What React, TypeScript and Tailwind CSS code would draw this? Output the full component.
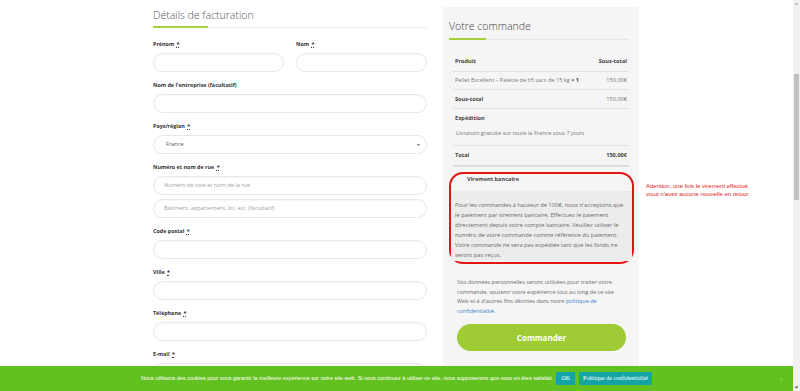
import React from "react";

function Label({ children }: { children: React.ReactNode }) {
  return (
    <div className="h-[8px] leading-[8px] text-[5.4px] font-bold text-[#333] mb-[5px] whitespace-nowrap">
      {children}
    </div>
  );
}

function Req() {
  return <span className="underline decoration-dotted ml-[1px]">*</span>;
}

function Input({ placeholder }: { placeholder?: string }) {
  return (
    <div className="h-[19px] rounded-full border border-[#e8e8e8] bg-white shadow-[inset_0_1px_2px_rgba(0,0,0,0.04)] flex items-center pl-[10px] text-[5.6px] text-[#a0a0a0] whitespace-nowrap">
      {placeholder}
    </div>
  );
}

function Field({ label, children }: { label: React.ReactNode; children?: React.ReactNode }) {
  return (
    <div className="mb-[9px]">
      <Label>{label}</Label>
      {children ?? <Input />}
    </div>
  );
}

function LeftCol() {
  return (
    <div className="w-[274px] shrink-0">
      <div className="pt-[8px] text-[10.5px] leading-[14px] font-light text-[#555] whitespace-nowrap">
        Détails de facturation
      </div>
      <div className="mt-[4px] flex items-end h-[2px]">
        <div className="w-[55px] h-[2px] bg-[#a6cf3c]" />
        <div className="flex-1 h-[1px] bg-[#ececec]" />
      </div>
      <div className="mt-[12px]">
        <div className="flex gap-[12px] mb-[9px]">
          <div className="w-[131px]">
            <Label>
              Prénom <Req />
            </Label>
            <Input />
          </div>
          <div className="flex-1">
            <Label>
              Nom <Req />
            </Label>
            <Input />
          </div>
        </div>
        <Field label={<>Nom de l'entreprise (facultatif)</>} />
        <Field
          label={
            <>
              Pays/région <Req />
            </>
          }
        >
          <div className="h-[19px] rounded-full border border-[#e8e8e8] bg-white flex items-center justify-between pl-[12px] pr-[6px] text-[5.6px] text-[#555]">
            <span>France</span>
            <svg width="3" height="2" viewBox="0 0 3 2">
              <path d="M0 0 L3 0 L1.5 2 Z" fill="#777" />
            </svg>
          </div>
        </Field>
        <div className="mb-[9px]">
          <Label>
            Numéro et nom de rue <Req />
          </Label>
          <Input placeholder="Numéro de voie et nom de la rue" />
          <div className="mt-[4px]">
            <Input placeholder="Bâtiment, appartement, lot, etc. (facultatif)" />
          </div>
        </div>
        <Field
          label={
            <>
              Code postal <Req />
            </>
          }
        />
        <Field
          label={
            <>
              Ville <Req />
            </>
          }
        />
        <Field
          label={
            <>
              Téléphone <Req />
            </>
          }
        />
        <Field
          label={
            <>
              E-mail <Req />
            </>
          }
        />
      </div>
    </div>
  );
}

function RightPanel() {
  const desc = [
    "Pour les commandes à hauteur de 100€, nous n'acceptons que",
    "le paiement par virement bancaire. Effectuez le paiement",
    "directement depuis votre compte bancaire. Veuillez utiliser le",
    "numéro de votre commande comme référence du paiement.",
    "Votre commande ne sera pas expédiée tant que les fonds ne",
    "seront pas reçus.",
  ];
  return (
    <div className="ml-[16px] mt-[7px] w-[196px] shrink-0 self-start bg-[#f5f5f5] pb-[30px]">
      <div className="px-[6px] pt-[12px]">
        <div className="text-[10.5px] leading-[14px] font-light text-[#444] whitespace-nowrap">
          Votre commande
        </div>
        <div className="mt-[5px] flex items-end h-[2px] mr-[4px]">
          <div className="w-[37px] h-[2px] bg-[#a6cf3c]" />
          <div className="flex-1 h-[1px] bg-[#e6e6e6]" />
        </div>
      </div>
      <div className="mx-[10px] mt-[12px] text-[5.6px] text-[#777]">
        <div className="h-[20px] flex items-center justify-between px-[2px] border-b border-[#e2e2e2] font-bold text-[#444]">
          <span>Produit</span>
          <span>Sous-total</span>
        </div>
        <div className="h-[18px] flex items-center justify-between px-[2px] border-b border-[#e2e2e2]">
          <span className="whitespace-nowrap">
            Pellet Excellent – Palette de 65 sacs de 15 kg <b className="text-[#444]">× 1</b>
          </span>
          <span>150,00€</span>
        </div>
        <div className="h-[19px] flex items-center justify-between px-[2px] border-b border-[#e2e2e2]">
          <span className="font-bold text-[#444]">Sous-total</span>
          <span>150,00€</span>
        </div>
        <div className="h-[37px] px-[2px] border-b border-[#e2e2e2] pt-[5px]">
          <div className="leading-[8px] font-bold text-[#444]">Expédition</div>
          <div className="leading-[8px] mt-[7px] pl-[1px] whitespace-nowrap">
            Livraison gratuite sur toute la France sous 7 jours
          </div>
        </div>
        <div className="h-[21px] flex items-center justify-between px-[2px] border-b-2 border-[#dedede] font-bold text-[#444]">
          <span>Total</span>
          <span>150,00€</span>
        </div>
      </div>
      <div className="mt-[5px] ml-[6px] mr-[5px] border-2 border-[#e31414] rounded-[14px] pb-[1px]">
        <div className="h-[17px] pt-[1px] pl-[16px] leading-[8px] text-[5.6px] font-bold text-[#444]">
          Virement bancaire
        </div>
        <div className="bg-[#ececec] h-[70px] pt-[9px] px-[4px] text-[5.75px] leading-[10px] text-[#6a6a6a]">
          {desc.map((l) => (
            <div key={l} className="whitespace-nowrap">
              {l}
            </div>
          ))}
        </div>
      </div>
      <div className="mt-[14px] ml-[14px] text-[5.55px] leading-[9.5px] text-[#6a6a6a]">
        <div className="whitespace-nowrap">Vos données personnelles seront utilisées pour traiter votre</div>
        <div className="whitespace-nowrap">commande, soutenir votre expérience tout au long de ce site</div>
        <div className="whitespace-nowrap">
          Web et à d'autres fins décrites dans notre <span className="text-[#3a7bc8]">politique de</span>
        </div>
        <div className="text-[#3a7bc8]">confidentialité.</div>
      </div>
      <div className="mt-[8px] ml-[14px] w-[169px] h-[27px] rounded-full bg-[#9fcb35] flex items-center justify-center text-white text-[8px] font-bold">
        Commander
      </div>
    </div>
  );
}

export default function App() {
  return (
    <div className="flex h-[391px] w-[800px] overflow-hidden bg-white font-['Open_Sans',sans-serif]">
      <div className="relative flex-1 flex pl-[153px]">
        <LeftCol />
        <RightPanel />
        <div className="ml-[7px] mt-[182px] text-[6px] leading-[8px] text-[#e01b1b] font-['Liberation_Sans',sans-serif] whitespace-nowrap">
          Attention, une fois le virement effectué,
          <br />
          vous n'avez aucune nouvelle en retour
        </div>
        <div className="absolute bottom-0 left-0 right-0 h-[25px] bg-[#63c11f] flex items-center justify-center font-['Liberation_Sans',sans-serif] text-white">
          <span className="text-[5.5px] whitespace-nowrap">
            Nous utilisons des cookies pour vous garantir la meilleure expérience sur notre site web. Si vous continuez à utiliser ce site, nous supposerons que vous en êtes satisfait.
          </span>
          <span className="ml-[3px] h-[13px] px-[5px] bg-[#13a5a6] flex items-center text-[6px] font-['Liberation_Serif',serif]">
            OK
          </span>
          <span className="ml-[4px] h-[13px] px-[4px] bg-[#13a5a6] flex items-center text-[6px] font-['Liberation_Serif',serif] whitespace-nowrap">
            Politique de confidentialité
          </span>
          <span className="absolute right-[10px] top-[9px] text-[6px] text-[#8fd45c]">×</span>
        </div>
      </div>
      <div className="w-[7px] shrink-0 bg-[#f1f1f1] flex flex-col items-center">
        <svg width="5" height="5" viewBox="0 0 5 5" className="mt-[1px]">
          <path d="M0.5 3.5 L2.5 1.5 L4.5 3.5 Z" fill="#a3a3a3" />
        </svg>
        <div className="mt-[68px] w-[5px] h-[126px] bg-[#c1c1c1]" />
        <div className="flex-1" />
        <svg width="5" height="5" viewBox="0 0 5 5" className="mb-[1px]">
          <path d="M0.5 1.5 L2.5 3.5 L4.5 1.5 Z" fill="#505050" />
        </svg>
      </div>
    </div>
  );
}
